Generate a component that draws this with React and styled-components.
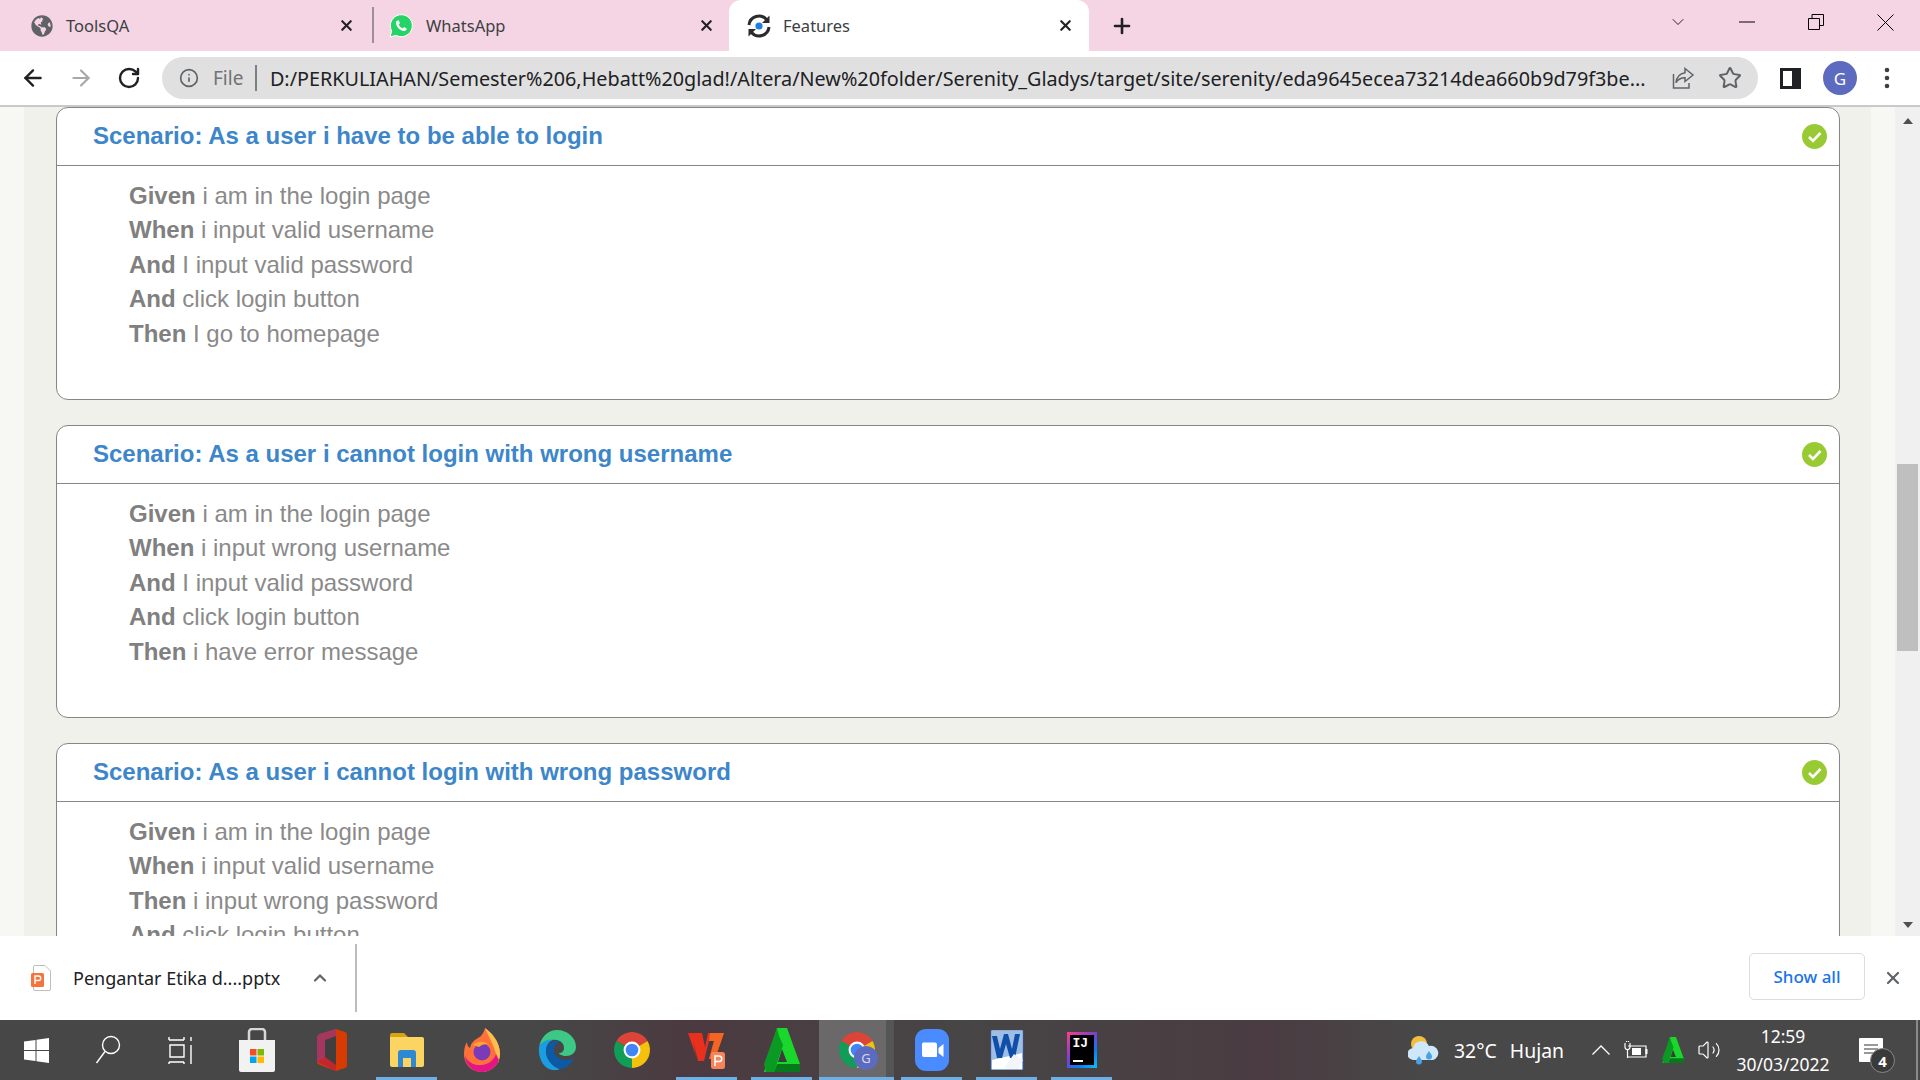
import React from 'react'
import styled, { createGlobalStyle } from 'styled-components'
import { FaGlobeAmericas } from 'react-icons/fa'
import { ArrowLeft, ArrowRight, RotateCw, Info, Star, X, Plus, ChevronDown, ChevronUp, Volume2 } from 'lucide-react'

const GlobalStyle = createGlobalStyle`
  html, body { margin: 0; padding: 0; overflow: hidden; }
  body { font-family: "Noto Sans", "Open Sans", sans-serif; }
  * { box-sizing: border-box; }
`

const scenarios = [
  {
    title: 'Scenario: As a user i have to be able to login',
    steps: [
      ['Given', 'i am in the login page'],
      ['When', 'i input valid username'],
      ['And', 'I input valid password'],
      ['And', 'click login button'],
      ['Then', 'I go to homepage'],
    ],
  },
  {
    title: 'Scenario: As a user i cannot login with wrong username',
    steps: [
      ['Given', 'i am in the login page'],
      ['When', 'i input wrong username'],
      ['And', 'I input valid password'],
      ['And', 'click login button'],
      ['Then', 'i have error message'],
    ],
  },
  {
    title: 'Scenario: As a user i cannot login with wrong password',
    steps: [
      ['Given', 'i am in the login page'],
      ['When', 'i input valid username'],
      ['Then', 'i input wrong password'],
      ['And', 'click login button'],
    ],
  },
]

const CheckBadge = () => (
  <svg width="25" height="25" viewBox="0 0 25 25">
    <circle cx="12.5" cy="12.5" r="12.5" fill="#98cb33" />
    <path d="M7 13l4 4 7.5-8" fill="none" stroke="#fff" strokeWidth="2.6" />
  </svg>
)

const FeaturesIcon = () => (
  <svg width="26" height="26" viewBox="0 0 26 26" fill="none">
    <path d="M3 12A10 10 0 0 1 20.5 6.5" stroke="#2b2b2b" strokeWidth="3" />
    <path d="M23 14A10 10 0 0 1 5.5 19.5" stroke="#2b2b2b" strokeWidth="3" />
    <path d="M23.5 2.5v7.5h-7.5zM2.5 23.5V16H10z" fill="#2b2b2b" />
    <circle cx="13" cy="13" r="3.6" fill="#1a7fe0" />
  </svg>
)

const WhatsAppIcon = () => (
  <svg width="24" height="24" viewBox="0 0 24 24">
    <path d="M1 23l1.7-6A11 11 0 1 1 7 21.300z" fill="#25d366" stroke="#fff" strokeWidth="1" />
    <path d="M8.500 6.500c-1 .4-1.800 1.500-1.500 3 .6 3.500 4 7 7.500 7.500 1.700.2 2.800-.6 3.100-1.800.1-.4.100-.7 0-.8l-2.600-1.300-1.200 1.400c-1.900-.7-3.300-2.100-4.100-4l1.200-1.200-1.100-2.700c-.3-.2-1.100-.2-1.300-.1z" fill="#fff" />
  </svg>
)

const ShareIcon = () => (
  <svg width="24" height="24" viewBox="0 0 24 24" fill="none" stroke="#5f6368" strokeWidth="1.500">
    <path d="M2.500 8v14h15.500v-5" />
    <path d="M14 2.500l8 6.500-8 6.500v-3.800c-4 0-7 1.500-9 5 .5-5.500 3.500-9 9-10z" />
  </svg>
)

const PanelIcon = () => (
  <svg width="21" height="21" viewBox="0 0 21 21">
    <path d="M0 0h21v21H0z" fill="#202124" />
    <path d="M3 3h9v15H3z" fill="#fff" />
  </svg>
)

const DotsIcon = () => (
  <svg width="6" height="24" viewBox="0 0 6 24" fill="#3c4043">
    <circle cx="3" cy="4" r="2.300" />
    <circle cx="3" cy="12" r="2.300" />
    <circle cx="3" cy="20" r="2.300" />
  </svg>
)

const PptIcon = () => (
  <svg width="20" height="26" viewBox="0 0 20 26">
    <path d="M4 .5h10l5.500 5.500v18a1.500 1.500 0 0 1-1.500 1.500H4A1.500 1.500 0 0 1 2.500 24V2A1.500 1.500 0 0 1 4 .5z" fill="#fff" stroke="#bdbdbd" />
    <rect x="0" y="8" width="13" height="14" rx="1.500" fill="#f5733c" />
    <path d="M4 19v-8h3.500a2 2 0 0 1 0 4.500H4" fill="none" stroke="#fff" strokeWidth="1.400" />
  </svg>
)

const WindowsIcon = () => (
  <svg width="25" height="25" viewBox="0 0 25 25" fill="#fff">
    <path d="M0 3.500L11.500 2v10H0zM12.500 1.800L25 0v12H12.500zM0 13h11.500v10L0 21.500zM12.500 13H25v12l-12.500-1.800z" />
  </svg>
)

const SearchIcon = () => (
  <svg width="26" height="30" viewBox="0 0 26 30" fill="none" stroke="#fff" strokeWidth="1.400">
    <circle cx="16" cy="10" r="8.500" />
    <path d="M10 16.500L1.500 28" />
  </svg>
)

const TaskViewIcon = () => (
  <svg width="28" height="28" viewBox="0 0 28 28" fill="none" stroke="#fff" strokeWidth="1.400">
    <path d="M1 4h15M16 1v3M1 1v3M2 9h14v12H2zM1 26h15M1 26v2M16 26v2M23 1v4M23 9v19" />
  </svg>
)

const StoreIcon = () => (
  <svg width="36" height="44" viewBox="0 0 36 44">
    <path d="M10 12V4a3 3 0 0 1 3-3h10a3 3 0 0 1 3 3v8" fill="none" stroke="#d8d8d8" strokeWidth="2.500" />
    <path d="M0 12h36v30a2 2 0 0 1-2 2H2a2 2 0 0 1-2-2z" fill="#f2f2f2" />
    <path d="M11 21h6.500v6.500H11z" fill="#f25022" />
    <path d="M18.500 21H25v6.500h-6.500z" fill="#7fba00" />
    <path d="M11 28.500h6.500V35H11z" fill="#00a4ef" />
    <path d="M18.500 28.500H25V35h-6.500z" fill="#ffb900" />
  </svg>
)

const OfficeIcon = () => (
  <svg width="30" height="42" viewBox="0 0 30 42">
    <path d="M0 9C0 7 1 6 3 5L19 0l9 3c1.500.5 2 1.500 2 3v30c0 1.500-.5 2.500-2 3l-9 3L3 36c-2-1-3-1.500-3-3z" fill="#d83b01" />
    <path d="M0 9c0-2 1-3 3-4L19 0v7L8 11v17L0 33z" fill="#a5365f" />
    <path d="M8 11l11-4v29L8 33.500z" fill="#3f3f3f" />
    <path d="M0 33l8-5 11 8v6z" fill="#c4262e" />
  </svg>
)

const ExplorerIcon = () => (
  <svg width="34" height="34" viewBox="0 0 34 34">
    <path d="M0 2a2 2 0 0 1 2-2h12l4 4h-18z" fill="#d9a211" />
    <path d="M0 4h32a2 2 0 0 1 2 2v26a2 2 0 0 1-2 2H2a2 2 0 0 1-2-2z" fill="#fcd462" />
    <path d="M8 34V20a3 3 0 0 1 3-3h12a3 3 0 0 1 3 3v14h-5v-9h-8v9z" fill="#2f88d3" />
  </svg>
)

const FirefoxIcon = () => (
  <svg width="36" height="44" viewBox="0 0 36 44">
    <path d="M18 44C7 44 0 36 0 26c0-5 1-9 3-12 0 3 1 5 3 6 1-6 6-9 8-10 4-2 6-6 7-10 3 3 6 5 9 10 4 5 6 10 6 16 0 10-8 18-18 18z" fill="#ff7139" />
    <path d="M21 0c6 4 15 13 15 26 0 3-1 6-2 9C32 20 26 12 21 0z" fill="#ffbd4f" />
    <path d="M18 44C8 44 1 36 1 28c3 6 9 10 17 9 7-1 12-5 14-11l3 6c-3 7-9 12-17 12z" fill="#e31587" />
    <circle cx="18" cy="24" r="8.500" fill="#7b3bb8" />
    <path d="M9 17c4-4 11-4 15-1-4 0-7 1-9 3z" fill="#ffa436" />
  </svg>
)

const EdgeIcon = () => (
  <svg width="38" height="40" viewBox="0 0 38 40">
    <path d="M1 17C3 7 10 0 19 0c11 0 19 8 19 17 0 6-5 9-10 9-4 0-7-2-7-3 3 0 5-2 5-5 0-6-6-9-12-8C8 11 3 13 1 17z" fill="#3cc885" />
    <path d="M1 17c3-6 9-8 14-7-5 2-7 6-7 11 0 8 6 15 14 18-2 1-4 1-6 1C7 40 0 30 1 17z" fill="#1b9de2" />
    <path d="M8 21c0-7 6-10 11-10 2 0 3 .4 4 1-4 0-7 3-7 8 0 6 6 10 12 10 3 0 6-1 8-2-3 7-9 11-14 11C14 37 8 29 8 21z" fill="#0c59a4" />
  </svg>
)

const ChromeIcon = () => (
  <svg width="38" height="38" viewBox="0 0 36 36">
    <path d="M18 18L3.300 9.500A17 17 0 0 1 32.700 9.500z" fill="#db4437" />
    <path d="M18 18L32.700 9.500A17 17 0 0 1 18 35z" fill="#f4c20d" />
    <path d="M18 18L18 35A17 17 0 0 1 3.300 9.500z" fill="#0f9d58" />
    <circle cx="18" cy="18" r="8" fill="#fff" />
    <circle cx="18" cy="18" r="6" fill="#4285f4" />
  </svg>
)

const WpsIcon = () => (
  <svg width="38" height="38" viewBox="0 0 38 38">
    <path d="M0 2h14l3 14 3-14h16l-9 26h-6l5-18h-5l-5 20h-6L5 10 8 25z" fill="#e9301f" />
    <path d="M22 2h14l-9 26h-6l5-18h-5z" fill="#f26522" />
    <rect x="23" y="21" width="14" height="17" rx="2.500" fill="#f5845b" />
    <path d="M27 35v-10h4a2.500 2.500 0 0 1 0 5.500h-4" fill="none" stroke="#fff" strokeWidth="1.500" />
  </svg>
)

const GreenDeltaIcon = ({ size = 44 }) => (
  <svg width={size} height={size} viewBox="0 0 36 44">
    <path d="M13 0h10L36 36l-5 8H0z" fill="#19d72b" />
    <path d="M13 0L0 36l2 8h8l9-27-4-9z" fill="#0a9a23" />
    <path d="M10 44h26v-8H13z" fill="#067a1a" />
    <path d="M18 21l-4 13h9z" fill="#3c3c3c" />
  </svg>
)

const ZoomIcon = () => (
  <svg width="34" height="42" viewBox="0 0 34 42">
    <rect width="34" height="42" rx="11" fill="#4a8cff" />
    <path d="M7 15a1.500 1.500 0 0 1 1.500-1.500H20a2 2 0 0 1 2 2V27a1 1 0 0 1-1 1H9a2 2 0 0 1-2-2zM23.500 19l5-4v13l-5-4z" fill="#fff" />
  </svg>
)

const WordIcon = () => (
  <svg width="34" height="40" viewBox="0 0 34 40">
    <path d="M1 0h32v40H1z" fill="#fff" stroke="#2a5ba8" />
    <path d="M2 1h30v22L2 30z" fill="#9fbee6" />
    <path d="M2 6l5 22h5l4-14 4 14h5l5-24h-5l-3 15-4-15h-4l-4 15L7 6z" fill="#0f4fa8" />
    <path d="M14 38l10-14 9 6-5 9z" fill="#f2f5fa" />
  </svg>
)

const WeatherIcon = () => (
  <svg width="32" height="30" viewBox="0 0 32 30">
    <circle cx="11" cy="9" r="8" fill="#f6bd3b" />
    <path d="M6 25a6 6 0 0 1-1-12 8.500 8.500 0 0 1 16-2 6.500 6.500 0 0 1 4 14z" fill="#cfe7fb" />
    <path d="M11 21c-2 3-3 4-3 5.500a3 3 0 0 0 6 0c0-1.500-1-2.500-3-5.500zM21 16c-2 3-3 4-3 5.500a3 3 0 0 0 6 0c0-1.500-1-2.500-3-5.500z" fill="#4aa2e6" />
  </svg>
)

const BatteryIcon = () => (
  <svg width="24" height="18" viewBox="0 0 24 18" fill="none" stroke="#fff" strokeWidth="1.200">
    <path d="M4 5h18v11H4" />
    <path d="M8 7h9v7H8z" fill="#fff" stroke="none" />
    <path d="M22.500 8v5" strokeWidth="2" />
    <path d="M1 2v4a2.500 2.500 0 0 0 5 0V2M2.500 1v-2M4.500 1v-2M3.500 9v8" />
  </svg>
)

const CaretIcon = () => (
  <svg width="18" height="10" viewBox="0 0 18 10" fill="none" stroke="#fff" strokeWidth="1.300">
    <path d="M.5 9.500L9 1l8.500 8.500" />
  </svg>
)

const Page = styled.div`
  width: 1920px;
  height: 1080px;
  display: flex;
  flex-direction: column;
  overflow: hidden;
  background: #fff;
`

const TabStrip = styled.div`
  height: 51px;
  flex: none;
  display: flex;
  align-items: stretch;
  background: #f5d5e3;
`

const Tab = styled.div`
  position: relative;
  width: ${(p) => p.$width}px;
  display: flex;
  align-items: center;
  padding: 0 ${(p) => p.$right}px 0 ${(p) => p.$left}px;
  gap: ${(p) => p.$gap}px;
  background: ${(p) => (p.$active ? '#fff' : 'transparent')};
  border-radius: ${(p) => (p.$active ? '12px 12px 0 0' : '0')};
  font-size: 16.500px;
  color: #3c4043;
`

const TabTitle = styled.span`
  flex: 1;
  white-space: nowrap;
`

const TabClose = styled.span`
  display: flex;
  color: #202124;
`

const TabDivider = styled.div`
  width: 2px;
  height: 36px;
  margin-top: 7px;
  background: #9c9096;
  flex: none;
`

const NewTab = styled.div`
  margin-left: 21px;
  display: flex;
  align-items: center;
  color: #202124;
`

const WindowControls = styled.div`
  margin-left: auto;
  display: flex;
  align-items: flex-start;
  padding-top: 12px;
  padding-right: 25px;
  gap: 49px;
`

const WinButton = styled.span`
  width: 20px;
  height: 20px;
  display: flex;
  align-items: center;
  justify-content: center;
`

const Toolbar = styled.div`
  height: 56px;
  flex: none;
  display: flex;
  align-items: center;
  background: #fff;
  border-bottom: 2px solid #c9c9c9;
`

const NavButton = styled.span`
  width: 48px;
  display: flex;
  justify-content: center;
  color: ${(p) => p.$color || '#202124'};
  margin-left: ${(p) => p.$offset || 0}px;
`

const Omnibox = styled.div`
  width: 1596px;
  height: 42px;
  margin-left: 9px;
  display: flex;
  align-items: center;
  background: #e0e0e0;
  border-radius: 21px;
  padding-left: 17px;
`

const FileLabel = styled.span`
  margin-left: 14px;
  font-size: 19px;
  color: #6f7276;
`

const OmniDivider = styled.span`
  width: 1.500px;
  height: 26px;
  margin: 0 13px 0 12px;
  background: #7d7f82;
`

const UrlText = styled.span`
  width: 1380px;
  overflow: hidden;
  white-space: nowrap;
  font-size: 19.800px;
  color: #202124;
`

const OmniActions = styled.span`
  display: flex;
  align-items: center;
  margin-left: 21px;
  gap: 23px;
  color: #5f6368;
`

const ToolActions = styled.div`
  display: flex;
  align-items: center;
  margin-left: 22px;
`

const Avatar = styled.span`
  width: 34px;
  height: 34px;
  margin-left: 22px;
  border-radius: 50%;
  background: #5c6bc0;
  color: #fff;
  font-size: 17px;
  display: flex;
  align-items: center;
  justify-content: center;
`

const MenuDots = styled.span`
  margin-left: 27px;
  display: flex;
`

const Viewport = styled.div`
  flex: 1;
  min-height: 0;
  display: flex;
  overflow: hidden;
  background: #f7f8f3;
`

const Gutter = styled.div`
  width: ${(p) => p.$width}px;
  flex: none;
`

const Sheet = styled.div`
  width: 1847px;
  flex: none;
  background: #f0f1ea;
  padding: 0 32px;
  display: flex;
  flex-direction: column;
  gap: 25px;
`

const Card = styled.section`
  flex: none;
  width: 1784px;
  height: 293px;
  background: #fff;
  border: 1.500px solid #868686;
  border-radius: 12px;
  font-family: "Liberation Sans", Arial, sans-serif;
`

const CardHeader = styled.header`
  height: 58px;
  display: flex;
  align-items: center;
  justify-content: space-between;
  padding: 0 12px 1px 36px;
  border-bottom: 1.500px solid #868686;
`

const CardTitle = styled.h3`
  margin: 0;
  font-size: 24px;
  font-weight: 700;
  color: #3d86c9;
`

const StepList = styled.div`
  padding: 13px 0 0 72px;
`

const Step = styled.div`
  font-size: 24px;
  line-height: 34.400px;
  color: #8a8a8a;
`

const Keyword = styled.b`
  color: #808080;
`

const Scrollbar = styled.div`
  width: 25px;
  flex: none;
  background: #f0f0f0;
  display: flex;
  flex-direction: column;
  align-items: center;
  padding: 11px 0 8px;
`

const Arrow = styled.span`
  width: 0;
  height: 0;
  flex: none;
  border-left: 5.500px solid transparent;
  border-right: 5.500px solid transparent;
  border-${(p) => (p.$up ? 'bottom' : 'top')}: 6px solid #505050;
`

const ThumbTrack = styled.div`
  flex: 1;
  width: 100%;
  display: flex;
  justify-content: center;
`

const Thumb = styled.div`
  width: 21px;
  height: 187px;
  margin-top: 340px;
  background: #bfbfbf;
`

const DownloadBar = styled.div`
  height: 84px;
  flex: none;
  display: flex;
  align-items: center;
  background: #fff;
  padding-left: 31px;
`

const FileName = styled.span`
  margin-left: 22px;
  font-size: 18px;
  color: #202124;
  white-space: nowrap;
`

const ChevronWrap = styled.span`
  margin-left: 30px;
  display: flex;
  color: #5f6368;
`

const BarDivider = styled.span`
  width: 2px;
  height: 68px;
  margin-left: 25px;
  background: #bdbdbd;
`

const ShowAll = styled.button`
  margin-left: auto;
  width: 116px;
  height: 47px;
  margin-bottom: 3px;
  background: #fff;
  border: 1px solid #dadce0;
  border-radius: 5px;
  color: #1a73e8;
  font: 500 17px "Noto Sans", sans-serif;
`

const BarClose = styled.span`
  display: flex;
  margin: 0 17px 0 18px;
  color: #5f6368;
`

const Taskbar = styled.div`
  height: 60px;
  flex: none;
  display: flex;
  align-items: stretch;
  color: #fff;
  background: linear-gradient(90deg, #474747 0%, #474747 28%, #4b3a40 36%, #474545 50%, #4a3c42 66%, #484848 74%, #484848 100%);
`

const TaskCell = styled.div`
  position: relative;
  width: ${(p) => p.$width || 75}px;
  display: flex;
  align-items: center;
  justify-content: center;
  background: ${(p) => (p.$current ? 'linear-gradient(90deg, #6a6868 0 89%, #555 89% 100%)' : 'transparent')};
  ${(p) =>
    p.$open &&
    `&::after {
      content: '';
      position: absolute;
      left: ${p.$current ? 0 : 7}px;
      right: ${p.$current ? 0 : 7}px;
      bottom: 0;
      height: 3px;
      background: #6db0e8;
    }`}
`

const ProfileBadge = styled.span`
  position: absolute;
  left: 35px;
  top: 26px;
  width: 24px;
  height: 24px;
  border-radius: 50%;
  background: #5c6bc0;
  color: #d5d8ee;
  font-size: 13px;
  display: flex;
  align-items: center;
  justify-content: center;
`

const IdeaIcon = styled.span`
  width: 30px;
  height: 36px;
  padding: 3px;
  background: linear-gradient(135deg, #fc3f8a 0%, #7a3fd0 45%, #087cfa 70%, #07c3f2 100%);
  display: block;
`

const IdeaInner = styled.span`
  height: 100%;
  display: flex;
  flex-direction: column;
  justify-content: space-between;
  background: #000;
  color: #fff;
  font: 700 13px/14px "Liberation Mono", monospace;
  padding: 2px 3px 3px;
  &::after {
    content: '';
    width: 10px;
    height: 2px;
    background: #fff;
  }
`

const Tray = styled.div`
  margin-left: auto;
  display: flex;
  align-items: center;
  padding-right: 4px;
`

const TrayText = styled.span`
  margin-left: ${(p) => p.$left}px;
  font-size: 19.400px;
  white-space: nowrap;
`

const TrayIcon = styled.span`
  margin-left: ${(p) => p.$left}px;
  display: flex;
`

const Clock = styled.div`
  margin-left: 15px;
  width: 94px;
  display: flex;
  flex-direction: column;
  align-items: center;
  gap: 5px;
  font-size: 17.500px;
  line-height: 23px;
  white-space: nowrap;
`

const Notify = styled.span`
  position: relative;
  width: 24px;
  height: 24px;
  margin-left: 29px;
  margin-right: 29px;
  background: #fff;
  display: block;
  border-radius: 1px;
`

const NotifyLines = styled.svg`
  display: block;
`

const NotifyCount = styled.span`
  position: absolute;
  left: 11px;
  top: 10px;
  width: 25px;
  height: 25px;
  border-radius: 50%;
  background: #3a3a3a;
  border: 1px solid #888;
  font-size: 15px;
  font-weight: 700;
  color: #fff;
  display: flex;
  align-items: center;
  justify-content: center;
`

const EdgeLine = styled.span`
  width: 2px;
  background: #8a8a8a;
  flex: none;
  margin-right: 2px;
`

const Scenario = ({ title, steps }) => (
  <Card>
    <CardHeader>
      <CardTitle>{title}</CardTitle>
      <CheckBadge />
    </CardHeader>
    <StepList>
      {steps.map(([word, text], i) => (
        <Step key={i}>
          <Keyword>{word}</Keyword> {text}
        </Step>
      ))}
    </StepList>
  </Card>
)

const App = () => {
  return (
    <Page>
      <GlobalStyle />
      <TabStrip>
        <Tab $width={372} $left={31} $right={17} $gap={13}>
          <FaGlobeAmericas size={22} color="#5f6368" />
          <TabTitle>ToolsQA</TabTitle>
          <TabClose><X size={17} strokeWidth={3} /></TabClose>
        </Tab>
        <TabDivider />
        <Tab $width={355} $left={15} $right={14} $gap={13}>
          <WhatsAppIcon />
          <TabTitle>WhatsApp</TabTitle>
          <TabClose><X size={17} strokeWidth={3} /></TabClose>
        </Tab>
        <Tab $active $width={360} $left={17} $right={15} $gap={11}>
          <FeaturesIcon />
          <TabTitle>Features</TabTitle>
          <TabClose><X size={17} strokeWidth={3} /></TabClose>
        </Tab>
        <NewTab><Plus size={24} strokeWidth={2.6} /></NewTab>
        <WindowControls>
          <WinButton><ChevronDown size={22} strokeWidth={1} /></WinButton>
          <WinButton>
            <svg width="16" height="2"><path d="M0 1h16" stroke="#000" /></svg>
          </WinButton>
          <WinButton>
            <svg width="16" height="16" fill="none" stroke="#000"><path d="M.5 4.500h11v11H.5zM4 4.500V.5h11.500v11h-4" /></svg>
          </WinButton>
          <WinButton>
            <svg width="17" height="17" fill="none" stroke="#000"><path d="M.5.5l16 16M16.500.5l-16 16" /></svg>
          </WinButton>
        </WindowControls>
      </TabStrip>

      <Toolbar>
        <NavButton $offset={9}><ArrowLeft size={26} strokeWidth={2.2} /></NavButton>
        <NavButton $color="#a8a8a8"><ArrowRight size={26} strokeWidth={2} /></NavButton>
        <NavButton><RotateCw size={24} strokeWidth={2.4} /></NavButton>
        <Omnibox>
          <Info size={20} color="#5f6368" strokeWidth={2} />
          <FileLabel>File</FileLabel>
          <OmniDivider />
          <UrlText>D:/PERKULIAHAN/Semester%206,Hebatt%20glad!/Altera/New%20folder/Serenity_Gladys/target/site/serenity/eda9645ecea73214dea660b9d79f3be...</UrlText>
          <OmniActions>
            <ShareIcon />
            <Star size={24} strokeWidth={2} />
          </OmniActions>
        </Omnibox>
        <ToolActions>
          <PanelIcon />
          <Avatar>G</Avatar>
          <MenuDots><DotsIcon /></MenuDots>
        </ToolActions>
      </Toolbar>

      <Viewport>
        <Gutter $width={24} />
        <Sheet>
          {scenarios.map((s) => (
            <Scenario key={s.title} title={s.title} steps={s.steps} />
          ))}
        </Sheet>
        <Gutter $width={24} />
        <Scrollbar>
          <Arrow $up />
          <ThumbTrack><Thumb /></ThumbTrack>
          <Arrow />
        </Scrollbar>
      </Viewport>

      <DownloadBar>
        <PptIcon />
        <FileName>Pengantar Etika d....pptx</FileName>
        <ChevronWrap><ChevronUp size={20} strokeWidth={2.6} /></ChevronWrap>
        <BarDivider />
        <ShowAll>Show all</ShowAll>
        <BarClose><X size={20} strokeWidth={2.6} /></BarClose>
      </DownloadBar>

      <Taskbar>
        <TaskCell $width={72}><WindowsIcon /></TaskCell>
        <TaskCell $width={72}><SearchIcon /></TaskCell>
        <TaskCell $width={75}><TaskViewIcon /></TaskCell>
        <TaskCell><StoreIcon /></TaskCell>
        <TaskCell><OfficeIcon /></TaskCell>
        <TaskCell $open><ExplorerIcon /></TaskCell>
        <TaskCell><FirefoxIcon /></TaskCell>
        <TaskCell><EdgeIcon /></TaskCell>
        <TaskCell><ChromeIcon /></TaskCell>
        <TaskCell $open><WpsIcon /></TaskCell>
        <TaskCell $open><GreenDeltaIcon /></TaskCell>
        <TaskCell $open $current>
          <ChromeIcon />
          <ProfileBadge>G</ProfileBadge>
        </TaskCell>
        <TaskCell $open><ZoomIcon /></TaskCell>
        <TaskCell $open><WordIcon /></TaskCell>
        <TaskCell $open>
          <IdeaIcon><IdeaInner>IJ</IdeaInner></IdeaIcon>
        </TaskCell>
        <Tray>
          <WeatherIcon />
          <TrayText $left={14}>32°C</TrayText>
          <TrayText $left={13}>Hujan</TrayText>
          <TrayIcon $left={28}><CaretIcon /></TrayIcon>
          <TrayIcon $left={14}><BatteryIcon /></TrayIcon>
          <TrayIcon $left={12}><GreenDeltaIcon size={26} /></TrayIcon>
          <TrayIcon $left={11}><Volume2 size={24} strokeWidth={1.2} /></TrayIcon>
          <Clock>
            <span>12:59</span>
            <span>30/03/2022</span>
          </Clock>
          <Notify>
            <NotifyLines width="24" height="20" viewBox="0 0 24 20" stroke="#333">
              <path d="M5 7h14M5 11h14M5 15h9" />
            </NotifyLines>
            <NotifyCount>4</NotifyCount>
          </Notify>
        </Tray>
        <EdgeLine />
      </Taskbar>
    </Page>
  )
}

export default App
